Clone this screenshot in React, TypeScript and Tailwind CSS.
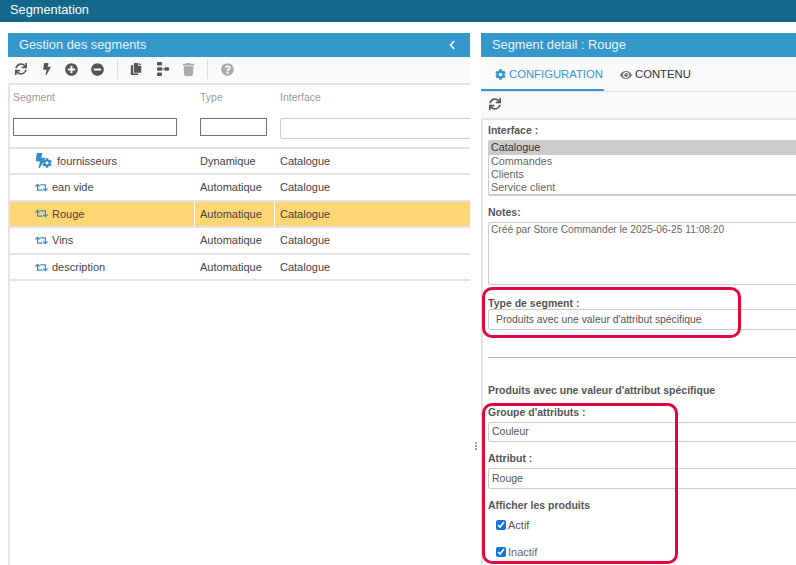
import { FaBolt, FaChevronLeft, FaCog, FaCopy, FaEye, FaMinusCircle, FaPlusCircle, FaQuestionCircle, FaRetweet, FaSync, FaTrash } from "react-icons/fa";

const rows = [
  { name: "fournisseurs", type: "Dynamique", dyn: true },
  { name: "ean vide", type: "Automatique" },
  { name: "Rouge", type: "Automatique", active: true },
  { name: "Vins", type: "Automatique" },
  { name: "description", type: "Automatique" },
];

function TreeIcon() {
  return (
    <svg viewBox="0 0 12 14" className="ml-[15px] h-[14px] w-[12px] fill-[#555]">
      <rect x="0" y="0" width="5" height="3.6" rx="1" />
      <rect x="0" y="5.2" width="5" height="3.6" rx="1" />
      <rect x="0" y="10.4" width="5" height="3.6" rx="1" />
      <rect x="7.5" y="5.2" width="4.5" height="3.6" rx="1" />
      <rect x="5" y="6.5" width="2.5" height="1" />
    </svg>
  );
}

function Toolbar() {
  return (
    <div className="flex h-[26px] shrink-0 items-center bg-[#fafafa] pb-[2px] pl-[7px] text-[#555]">
      <FaSync className="size-[12px]" />
      <FaBolt className="ml-[14px] size-[12px]" />
      <FaPlusCircle className="ml-[12px] size-[13px]" />
      <FaMinusCircle className="ml-[13px] size-[13px]" />
      <div className="ml-[13px] h-[20px] w-px bg-[#ddd]" />
      <FaCopy className="ml-[12px] size-[12px]" />
      <TreeIcon />
      <FaTrash className="ml-[13px] size-[13px] text-[#aaa]" />
      <div className="ml-[12px] h-[20px] w-px bg-[#ddd]" />
      <FaQuestionCircle className="ml-[13px] size-[13px] text-[#aaa]" />
    </div>
  );
}

function SegmentTable() {
  return (
    <div className="flex-1 border-t-2 border-l-2 border-[#e4e4e4] bg-white text-[11px] text-[#444]">
      <div className="flex h-[63.5px] border-b-2 border-[#e4e4e4] text-[10.5px] text-[#999]">
        <div className="w-[185px] pl-[3px]">
          <p className="mt-[5px] h-[20px]">Segment</p>
          <input className="mt-[8px] block h-[18px] w-[164px] border border-[#707070]" />
        </div>
        <div className="w-[80px] pl-[5px]">
          <p className="mt-[5px] h-[20px]">Type</p>
          <input className="mt-[8px] block h-[18px] w-[67px] border border-[#707070]" />
        </div>
        <div className="flex-1 overflow-hidden pl-[5px]">
          <p className="mt-[5px] h-[20px]">Interface</p>
          <input className="mt-[8px] block h-[21px] w-[220px] rounded-[2px] border border-[#ccc]" />
        </div>
      </div>
      {rows.map((row) => (
        <div key={row.name} className={`flex h-[26.6px] items-center border-b-2 border-[#e4e4e4] ${row.active ? "bg-[#fed674]" : ""}`}>
          <div className="flex h-full w-[185px] items-center border-r border-white pl-[25px]">
            {row.dyn ? (
              <span className="relative mr-[3px] -ml-[2px] block h-[15px] w-[21px] text-[#2f8fc4]">
                <FaBolt className="size-[15px]" />
                <FaCog className="absolute right-[2px] bottom-0 size-[10px]" />
              </span>
            ) : (
              <FaRetweet className="mr-[4px] size-[13px] text-[#3b8fc2]" />
            )}
            {row.name}
          </div>
          <div className="flex h-full w-[80px] items-center border-r border-white pl-[5px]">{row.type}</div>
          <div className="pl-[5px]">Catalogue</div>
        </div>
      ))}
    </div>
  );
}

function Label({ children, className = "" }: { children: React.ReactNode; className?: string }) {
  return <p className={`text-[10.5px] leading-[13px] font-bold text-[#555] ${className}`}>{children}</p>;
}

function TextBox({ value, className = "" }: { value: string; className?: string }) {
  return <div className={`flex w-[340px] items-center rounded-[2px] border border-[#ccc] bg-white text-[10.5px] text-[#555] ${className}`}>{value}</div>;
}

function DetailForm() {
  return (
    <div className="flex-1 border-t-2 border-l-2 border-[#e4e4e4] bg-white pt-[4px] pl-[5px]">
      <Label>Interface :</Label>
      <div className="mt-[3px] h-[56px] w-[340px] rounded-[2px] border border-b-2 border-[#ccc] text-[10.8px] leading-[13px] text-[#666]">
        <p className="h-[14px] bg-[#cbcbcb] pl-[2px] leading-[12px] text-[#333]">Catalogue</p>
        <p className="pl-[2px]">Commandes</p>
        <p className="pl-[2px]">Clients</p>
        <p className="pl-[2px]">Service client</p>
      </div>
      <Label className="mt-[10px]">Notes:</Label>
      <div className="mt-[3px] h-[63px] w-[340px] rounded-[2px] border border-[#ccc] pl-[2px] text-[10.2px] leading-[13px] text-[#666]">
        Créé par Store Commander le 2025-06-25 11:08:20
      </div>
      <Label className="mt-[12px]">Type de segment :</Label>
      <TextBox value="Produits avec une valeur d'attribut spécifique" className="-mt-[1px] h-[21px] pl-[7px] text-[10.35px] text-[#444]" />
      <div className="mt-[27px] h-px w-[340px] bg-[#a9bccb]" />
      <Label className="mt-[26px]">Produits avec une valeur d'attribut spécifique</Label>
      <Label className="mt-[9px]">Groupe d'attributs :</Label>
      <TextBox value="Couleur" className="mt-[3px] h-[20px] pl-[3px]" />
      <Label className="mt-[10px]">Attribut :</Label>
      <TextBox value="Rouge" className="mt-[3px] h-[21px] pl-[3px]" />
      <Label className="mt-[10px]">Afficher les produits</Label>
      <div className="mt-[5px] ml-[8px] flex h-[16px] items-center gap-[2px] text-[11px] text-[#555]">
        <input type="checkbox" defaultChecked className="size-[10px] accent-[#0f75d8]" />Actif
      </div>
      <div className="mt-[11px] ml-[8px] flex h-[16px] items-center gap-[2px] text-[11px] text-[#666]">
        <input type="checkbox" defaultChecked className="size-[10px] accent-[#0f75d8]" />Inactif
      </div>
    </div>
  );
}

export default function App() {
  return (
    <div className="relative flex h-[565px] w-[796px] flex-col overflow-hidden bg-white font-['Liberation_Sans',sans-serif]">
      <div className="flex h-[22px] shrink-0 items-center bg-[#14688c] pb-[2px] pl-[10px] text-[12.8px] text-white">Segmentation</div>

      <div className="flex min-h-0 flex-1 pt-[11px] pl-[8px]">
        <section className="flex w-[462px] shrink-0 flex-col">
          <div className="flex h-[24px] shrink-0 items-center justify-between bg-[#3498cd] pr-[13px] pl-[11px] text-[12.8px] text-[#eaf5fb]">
            Gestion des segments
            <FaChevronLeft className="size-[10px] text-white" />
          </div>
          <Toolbar />
          <SegmentTable />
        </section>

        <div className="relative w-[11px] shrink-0">
          <div className="absolute top-[409px] left-[5px] flex flex-col gap-[1px]">
            <span className="size-[2px] bg-[#999]" />
            <span className="size-[2px] bg-[#999]" />
            <span className="size-[2px] bg-[#999]" />
          </div>
        </div>

        <section className="flex min-w-0 flex-1 flex-col">
          <div className="flex h-[24px] shrink-0 items-center bg-[#3498cd] pl-[11px] text-[12.8px] text-[#eaf5fb]">Segment detail : Rouge</div>
          <div className="flex h-[35px] shrink-0 items-stretch border-b border-[#e4e4e4] bg-[#fafafa] text-[11.3px]">
            <div className="flex w-[123px] items-center gap-[3px] border-b-2 border-[#3498cd] pt-[3px] pl-[14px] text-[#3498cd]">
              <FaCog className="size-[11px]" />CONFIGURATION
            </div>
            <div className="flex items-center gap-[3px] pt-[1px] pl-[16px] text-[#333]">
              <FaEye className="size-[12px] text-[#777]" />CONTENU
            </div>
          </div>
          <div className="flex h-[26px] shrink-0 items-center bg-[#fafafa] pb-[3px] pl-[8px] text-[#555]">
            <FaSync className="size-[12px]" />
          </div>
          <DetailForm />
        </section>
      </div>

      <div className="absolute top-[287px] left-[482px] h-[51px] w-[259px] rounded-[10px] border-[3px] border-[#e2063e]" />
      <div className="absolute top-[403px] left-[482px] h-[161px] w-[196px] rounded-[10px] border-[3px] border-[#e2063e]" />
    </div>
  );
}
